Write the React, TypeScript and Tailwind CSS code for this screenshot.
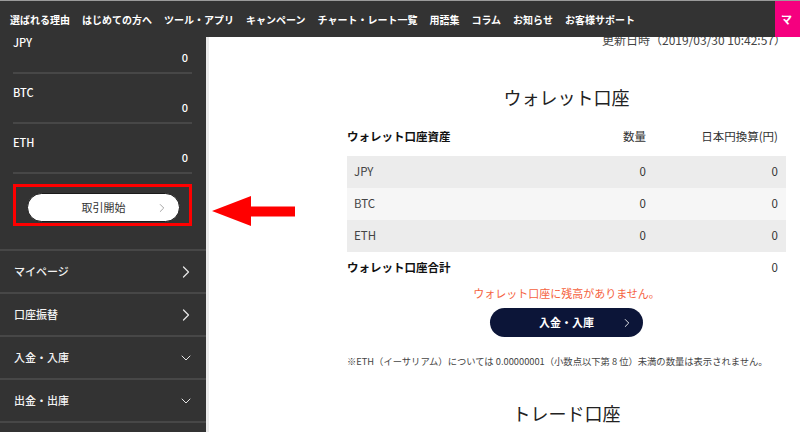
import { ChevronDown, ChevronRight } from "lucide-react";

const navItems = [
  "選ばれる理由",
  "はじめての方へ",
  "ツール・アプリ",
  "キャンペーン",
  "チャート・レート一覧",
  "用語集",
  "コラム",
  "お知らせ",
  "お客様サポート",
];

const balances = ["JPY", "BTC", "ETH"];

const menu = [
  { label: "マイページ", open: false },
  { label: "口座振替", open: false },
  { label: "入金・入庫", open: true },
  { label: "出金・出庫", open: true },
];

const rows = [
  { name: "JPY", bg: "bg-[#ececec]" },
  { name: "BTC", bg: "bg-[#f6f6f6]" },
  { name: "ETH", bg: "bg-[#ececec]" },
];

function Sidebar() {
  return (
    <aside className="w-[206px] shrink-0 bg-[#333333] text-white">
      <div className="-mt-[2px] ml-[13px] mr-[14px]">
        {balances.map((b) => (
          <div key={b} className="border-b-2 border-[#474747] pb-[8px] pt-[11px] first:pt-0">
            <p className="text-[11px] leading-[14px] font-medium">{b}</p>
            <p className="mt-[1px] pr-[4px] text-right text-[11px] leading-[14px] font-medium">0</p>
          </div>
        ))}
      </div>

      {/* 注目枠 */}
      <div className="ml-[13px] mr-[14px] mt-[10px] border-[3px] border-[#ff0000] pb-[1px] pl-[11px] pr-[9px] pt-[6px]">
        <button className="relative flex h-[29px] w-full items-center justify-center rounded-full border border-[#1a1a1a] bg-white text-[11px] text-[#333]">
          取引開始
          <ChevronRight size={14} strokeWidth={1.5} className="absolute right-[10px] text-[#999]" />
        </button>
      </div>

      <div className="mt-[23px] border-t-2 border-[#474747]">
        {menu.map((m) => (
          <div
            key={m.label}
            className="flex h-[43px] items-center justify-between border-b-2 border-[#474747] pl-[14px] pr-[10px]"
          >
            <span className="text-[11px] font-medium text-[#f2f2f2]">{m.label}</span>
            <span className="flex w-[20px] justify-center text-[#e5e5e5]">
              {m.open ? (
                <ChevronDown size={16} strokeWidth={1.5} />
              ) : (
                <ChevronRight size={20} strokeWidth={1.5} />
              )}
            </span>
          </div>
        ))}
      </div>
    </aside>
  );
}

function Wallet() {
  return (
    <main className="flex-1 border-l-[3px] border-[#ebebeb] bg-white pl-[138px] text-[#333]">
      <div className="w-[439px]">
        <p className="-mt-[4px] whitespace-nowrap text-right text-[12px] leading-[14px] text-[#444]">
          更新日時（2019/03/30 10:42:57）
        </p>

        <h2 className="mt-[38px] text-center text-[18px] leading-[24px] text-[#222]">ウォレット口座</h2>

        <div className="mt-[9px] text-[11.5px]">
          <div className="grid h-[38px] grid-cols-[1fr_100px_140px] items-center">
            <span className="font-bold text-[#111]">ウォレット口座資産</span>
            <span className="text-right text-[#333]">数量</span>
            <span className="pr-[8px] text-right text-[#333]">日本円換算(円)</span>
          </div>
          {rows.map((r) => (
            <div key={r.name} className={`grid h-[32px] grid-cols-[1fr_100px_140px] items-center ${r.bg}`}>
              <span className="pl-[7px] text-[#444]">{r.name}</span>
              <span className="text-right">0</span>
              <span className="pr-[8px] text-right">0</span>
            </div>
          ))}
          <div className="grid h-[31px] grid-cols-[1fr_100px_140px] items-center">
            <span className="font-bold text-[#111]">ウォレット口座合計</span>
            <span />
            <span className="pr-[8px] text-right">0</span>
          </div>
        </div>

        <p className="mt-[2px] text-center text-[11px] leading-[16px] text-[#f5623e]">
          ウォレット口座に残高がありません。
        </p>

        <div className="mt-[7px] flex justify-center">
          <button className="relative flex h-[29px] w-[153px] items-center justify-center rounded-full bg-[#0c1538] text-[11px] font-bold text-white">
            入金・入庫
            <ChevronRight size={14} strokeWidth={1.5} className="absolute right-[9px]" />
          </button>
        </div>

        <p className="mt-[17px] whitespace-nowrap text-[9.3px] leading-[14px] text-[#444]">
          ※ETH（イーサリアム）については 0.00000001（小数点以下第 8 位）未満の数量は表示されません。
        </p>

        <h2 className="mt-[33px] text-center text-[18px] leading-[24px] text-[#222]">トレード口座</h2>
      </div>
    </main>
  );
}

export default function App() {
  return (
    <div className="relative h-[432px] w-[800px] overflow-hidden bg-white font-['Noto_Sans_CJK_JP',sans-serif]">
      <header className="relative z-10 flex h-[37px] border-t border-[#9b9b9b] bg-[#333333] text-white">
        <nav className="flex flex-1 items-center gap-[12px] pl-[10px] text-[10px] font-bold">
          {navItems.map((n) => (
            <span key={n} className="whitespace-nowrap">
              {n}
            </span>
          ))}
        </nav>
        <div className="flex w-[25px] items-center bg-[#f5007f] pl-[6px] text-[11px] font-bold">マ</div>
      </header>

      <div className="flex h-[395px]">
        <Sidebar />
        <Wallet />
      </div>

      {/* 注釈の矢印 */}
      <svg className="absolute left-[211px] top-[196px]" width="85" height="31" viewBox="0 0 85 31">
        <polygon points="1,15 40,0 40,10.5 84,10.5 84,20.5 40,20.5 40,30" fill="#ff0000" />
      </svg>
    </div>
  );
}
